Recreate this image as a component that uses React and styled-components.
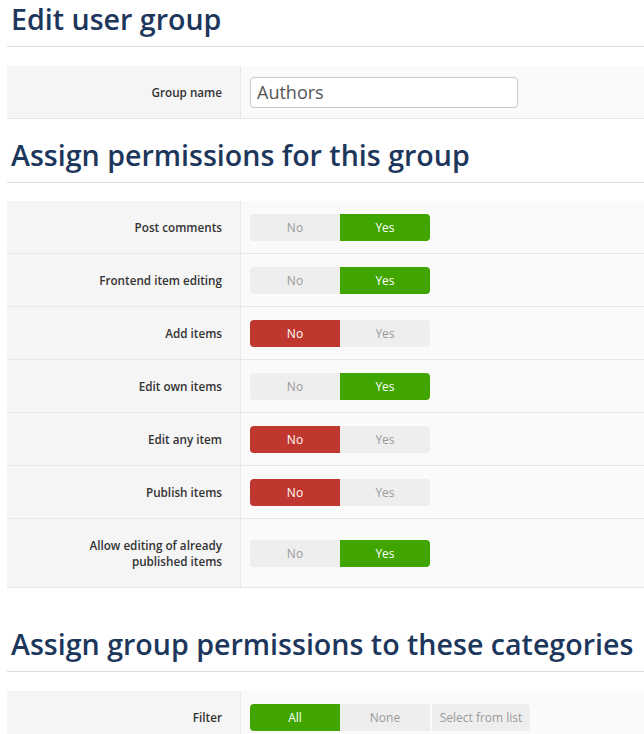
import React from "react";
import styled, { createGlobalStyle } from "styled-components";

const GlobalStyle = createGlobalStyle`
  body {
    margin: 0;
    background: #ffffff;
    font-family: "Open Sans", "Liberation Sans", sans-serif;
  }
`;

const Page = styled.div`
  padding-left: 7px;
  overflow: hidden;
`;

const Heading = styled.h2`
  margin: ${(p) => p.$top || 0}px 0 ${(p) => p.$bottom || 19}px;
  padding: 1px 0 9px 4px;
  font-size: 28.6px;
  line-height: 36px;
  font-weight: 600;
  color: #1c365c;
  border-bottom: 1px solid #dcdcdc;
  white-space: nowrap;
`;

const Table = styled.div`
  display: flex;
  flex-direction: column;
`;

const Row = styled.div`
  display: flex;
  border-bottom: 1px solid #e6e6e6;
  &:last-child {
    border-bottom: ${(p) => (p.$open ? "none" : "1px solid #e6e6e6")};
  }
`;

const Label = styled.div`
  flex: 0 0 234px;
  box-sizing: border-box;
  padding: 18px 18px;
  text-align: right;
  background: #f5f5f5;
  border-right: 1px solid #e8e8e8;
  font-size: 11.7px;
  line-height: 16px;
  font-weight: 600;
  color: #333333;
`;

const Field = styled.div`
  flex: 1;
  display: flex;
  align-items: center;
  padding-left: 9px;
  background: #fafafa;
`;

const TextInput = styled.input`
  box-sizing: border-box;
  width: 268px;
  height: 31px;
  padding: 0 6px;
  border: 1px solid #c8c8c8;
  border-radius: 4px;
  background: #ffffff;
  font-family: "Open Sans", "Liberation Sans", sans-serif;
  font-size: 18px;
  color: #555555;
  outline: none;
`;

const Switch = styled.div`
  display: flex;
  height: 27px;
  border-radius: 4px;
  overflow: hidden;
`;

const colors = {
  yes: "#41a500",
  no: "#c0372f",
  off: "#eeeeee",
};

const Segment = styled.div`
  width: ${(p) => p.$width || 90}px;
  margin-left: ${(p) => (p.$gap ? 2 : 0)}px;
  display: flex;
  align-items: center;
  justify-content: center;
  font-size: 12px;
  color: ${(p) => (p.$on ? "#ffffff" : "#9a9a9a")};
  background: ${(p) => (p.$on ? colors[p.$tone] : colors.off)};
`;

const permissions = [
  { label: "Post comments", yes: true },
  { label: "Frontend item editing", yes: true },
  { label: "Add items", yes: false },
  { label: "Edit own items", yes: true },
  { label: "Edit any item", yes: false },
  { label: "Publish items", yes: false },
  { label: ["Allow editing of already", "published items"], yes: true },
];

const YesNo = ({ yes }) => (
  <Switch>
    <Segment $on={!yes} $tone="no">No</Segment>
    <Segment $on={yes} $tone="yes">Yes</Segment>
  </Switch>
);

export default function App() {
  return (
    <Page>
      <GlobalStyle />
      <Heading>Edit user group</Heading>
      <Table>
        <Row>
          <Label>Group name</Label>
          <Field>
            <TextInput defaultValue="Authors" />
          </Field>
        </Row>
      </Table>

      <Heading $top={17} $bottom={18}>
        Assign permissions for this group
      </Heading>
      <Table>
        {permissions.map((p) => (
          <Row key={String(p.label)}>
            <Label>
              {Array.isArray(p.label) ? (
                <>
                  {p.label[0]}
                  <br />
                  {p.label[1]}
                </>
              ) : (
                p.label
              )}
            </Label>
            <Field>
              <YesNo yes={p.yes} />
            </Field>
          </Row>
        ))}
      </Table>

      <Heading $top={37}>Assign group permissions to these categories</Heading>
      <Table>
        <Row $open>
          <Label>Filter</Label>
          <Field>
            <Switch>
              <Segment $on $tone="yes">All</Segment>
              <Segment>None</Segment>
              <Segment $gap $width={98}>Select from list</Segment>
            </Switch>
          </Field>
        </Row>
      </Table>
    </Page>
  );
}
